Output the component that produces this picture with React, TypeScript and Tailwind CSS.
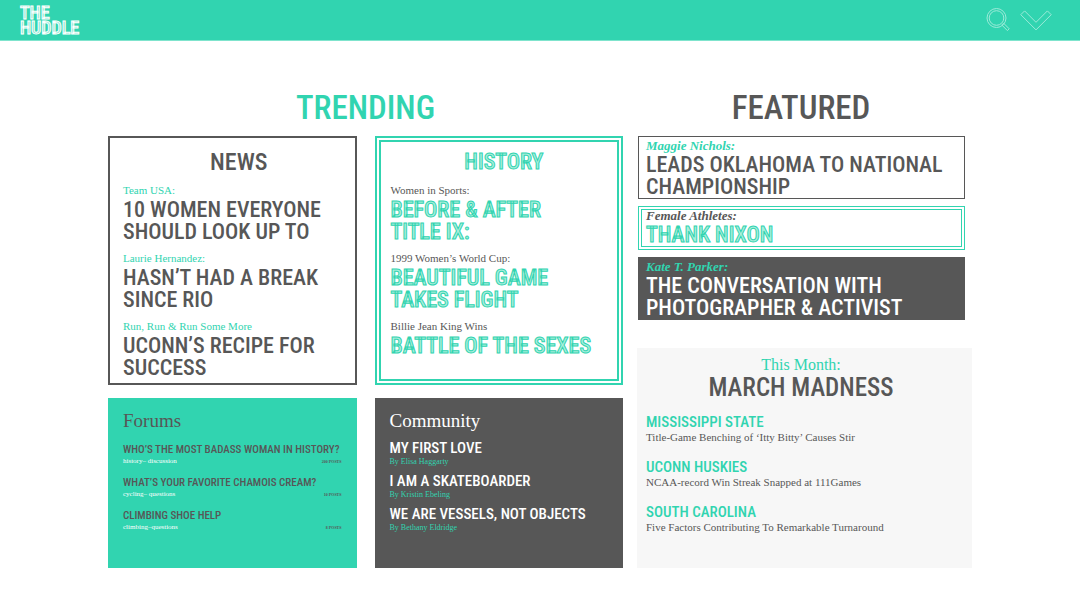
import React from "react";

const serif = "font-['Liberation_Serif',serif]";
const outlined = "text-[#a9efdd] [-webkit-text-stroke:1px_#31d4b0]";

type Story = { kicker: string; title: string };

const news: Story[] = [
  { kicker: "Team USA:", title: "10 WOMEN EVERYONE SHOULD LOOK UP TO" },
  { kicker: "Laurie Hernandez:", title: "HASN’T HAD A BREAK SINCE RIO" },
  { kicker: "Run, Run & Run Some More", title: "UCONN’S RECIPE FOR SUCCESS" },
];

const history: Story[] = [
  { kicker: "Women in Sports:", title: "BEFORE & AFTER TITLE IX:" },
  { kicker: "1999 Women’s World Cup:", title: "BEAUTIFUL GAME TAKES FLIGHT" },
  { kicker: "Billie Jean King Wins", title: "BATTLE OF THE SEXES" },
];

const forums = [
  { title: "WHO’S THE MOST BADASS WOMAN IN HISTORY?", tags: "history– discussion", posts: "200 POSTS" },
  { title: "WHAT’S YOUR FAVORITE CHAMOIS CREAM?", tags: "cycling– questions", posts: "10 POSTS" },
  { title: "CLIMBING SHOE HELP", tags: "climbing–questions", posts: "8 POSTS" },
];

const community = [
  { title: "MY FIRST LOVE", author: "By Elisa Haggarty" },
  { title: "I AM A SKATEBOARDER", author: "By Kristin Ebeling" },
  { title: "WE ARE VESSELS, NOT OBJECTS", author: "By Bethany Eldridge" },
];

const madness = [
  { title: "MISSISSIPPI STATE", text: "Title-Game Benching of ‘Itty Bitty’ Causes Stir" },
  { title: "UCONN HUSKIES", text: "NCAA-record Win Streak Snapped at 111Games" },
  { title: "SOUTH CAROLINA", text: "Five Factors Contributing To Remarkable Turnaround" },
];

function StoryList({ items, kickerClass, titleClass }: { items: Story[]; kickerClass: string; titleClass: string }) {
  return (
    <ul className="flex flex-col gap-[7px]">
      {items.map((s) => (
        <li key={s.title}>
          <p className={`text-[11px] leading-[17px] ${serif} ${kickerClass}`}>{s.kicker}</p>
          <h4 className={`max-w-[204px] text-[22px] leading-[22px] font-medium ${titleClass}`}>
            <a href="#">{s.title}</a>
          </h4>
        </li>
      ))}
    </ul>
  );
}

function FeaturedCard({ story, frame, kickerClass, titleClass }: { story: Story; frame: string; kickerClass: string; titleClass: string }) {
  return (
    <article className={`border px-[7px] ${frame}`}>
      <p className={`text-[13px] leading-[17px] font-bold italic ${serif} ${kickerClass}`}>{story.kicker}</p>
      <h3 className={`text-[22px] leading-[22px] font-medium ${titleClass}`}>
        <a href="#">{story.title}</a>
      </h3>
    </article>
  );
}

export default function App() {
  return (
    <div className="min-h-screen bg-white font-['Roboto_Condensed',Roboto,sans-serif] text-[#575757]">
      <header className="flex h-[41px] items-center justify-between border-b border-[#7fe4cd] bg-[#31d4b0] pr-[27px] pl-5">
        <a href="#" className="text-[18px] leading-[15px] font-medium text-[#7fe4cd] [-webkit-text-stroke:1px_#ffffff]">
          <span className="block">THE</span>
          <span className="block">HUDDLE</span>
        </a>
        <div className="flex items-center gap-[7px]">
          <button type="button" aria-label="Search">
            <svg width="26" height="26" viewBox="0 0 26 26" fill="none" stroke="#9cebd9" strokeWidth="1">
              <circle cx="10.5" cy="11" r="9.5" />
              <circle cx="10.5" cy="11" r="7.3" />
              <path d="M15.8 18 L17.6 16.2 L23.2 21.8 L21.4 23.6 Z" />
            </svg>
          </button>
          <button type="button" aria-label="Menu">
            <svg width="34" height="24" viewBox="0 0 34 24" fill="none" stroke="#9cebd9" strokeWidth="1">
              <path d="M1.8 6.7 L5.6 2.9 L17 14.3 L28.4 2.9 L32.2 6.7 L17 21.9 Z" />
            </svg>
          </button>
        </div>
      </header>

      <main className="mx-auto flex w-4/5 gap-[14px] pt-[47px] pb-10">
        <section className="min-w-0 flex-[515]">
          <h2 className="mb-2 text-center text-[33px] leading-10 font-medium text-[#31d4b0]">TRENDING</h2>
          <div className="grid grid-cols-2 gap-x-[18px] gap-y-[13px]">
            <section className="border-2 border-[#575757] pt-[10px] pb-1 pl-[13px]">
              <h3 className="mb-[6px] text-center text-[24px] leading-7 font-medium">NEWS</h3>
              <StoryList items={news} kickerClass="text-[#31d4b0]" titleClass="" />
            </section>

            <section className="border-6 border-double border-[#31d4b0] pt-[6px] pl-[10px]">
              <h3 className={`mb-[6px] text-center text-[22px] leading-7 font-medium ${outlined}`}>HISTORY</h3>
              <StoryList items={history} kickerClass="" titleClass={outlined} />
            </section>

            <section className="bg-[#31d4b0] px-[15px] pt-[11px] pb-9">
              <h3 className={`mb-[10px] text-[19px] leading-6 ${serif}`}>Forums</h3>
              <ul className="flex flex-col gap-[10px]">
                {forums.map((f) => (
                  <li key={f.title}>
                    <h4 className="text-[11px] leading-[14px] font-medium whitespace-nowrap">
                      <a href="#">{f.title}</a>
                    </h4>
                    <div className={`flex items-center justify-between leading-[9px] ${serif}`}>
                      <span className="text-[7px] text-white">{f.tags}</span>
                      <span className="text-[4px] font-bold">{f.posts}</span>
                    </div>
                  </li>
                ))}
              </ul>
            </section>

            <section className="bg-[#575757] px-[15px] pt-[11px] pb-9 text-white">
              <h3 className={`mb-[6px] text-[19px] leading-6 ${serif}`}>Community</h3>
              <ul className="flex flex-col gap-[6px]">
                {community.map((c) => (
                  <li key={c.title}>
                    <h4 className="text-[15px] leading-[18px] font-medium whitespace-nowrap">
                      <a href="#">{c.title}</a>
                    </h4>
                    <p className={`text-[8px] leading-[9px] text-[#31d4b0] ${serif}`}>{c.author}</p>
                  </li>
                ))}
              </ul>
            </section>
          </div>
        </section>

        <section className="flex min-w-0 flex-[335] flex-col">
          <h2 className="mr-[7px] mb-2 text-center text-[33px] leading-10 font-medium">FEATURED</h2>
          <div className="mr-[7px] ml-px flex flex-col gap-[7px]">
            <FeaturedCard
              story={{ kicker: "Maggie Nichols:", title: "LEADS OKLAHOMA TO NATIONAL CHAMPIONSHIP" }}
              frame="border-[#575757]"
              kickerClass="text-[#31d4b0]"
              titleClass=""
            />
            <FeaturedCard
              story={{ kicker: "Female Athletes:", title: "THANK NIXON" }}
              frame="border-[#31d4b0] pb-[3px] outline outline-offset-[-4px] outline-[#31d4b0]"
              kickerClass=""
              titleClass={outlined}
            />
            <FeaturedCard
              story={{ kicker: "Kate T. Parker:", title: "THE CONVERSATION WITH PHOTOGRAPHER & ACTIVIST" }}
              frame="border-[#575757] bg-[#575757]"
              kickerClass="text-[#31d4b0]"
              titleClass="text-white max-w-[290px]"
            />
          </div>

          <section className="mt-7 flex-1 bg-[#f7f7f7] pt-[6px] pr-4 pl-[9px]">
            <p className={`text-center text-base leading-[22px] text-[#31d4b0] ${serif}`}>This Month:</p>
            <h3 className="mb-[13px] text-center text-[25px] leading-6 font-medium">MARCH MADNESS</h3>
            <ul className="flex flex-col gap-[14px]">
              {madness.map((m) => (
                <li key={m.title}>
                  <h4 className="text-[15px] leading-[18px] font-medium text-[#31d4b0]">
                    <a href="#">{m.title}</a>
                  </h4>
                  <p className={`text-[11px] leading-[13px] ${serif}`}>{m.text}</p>
                </li>
              ))}
            </ul>
          </section>
        </section>
      </main>
    </div>
  );
}
